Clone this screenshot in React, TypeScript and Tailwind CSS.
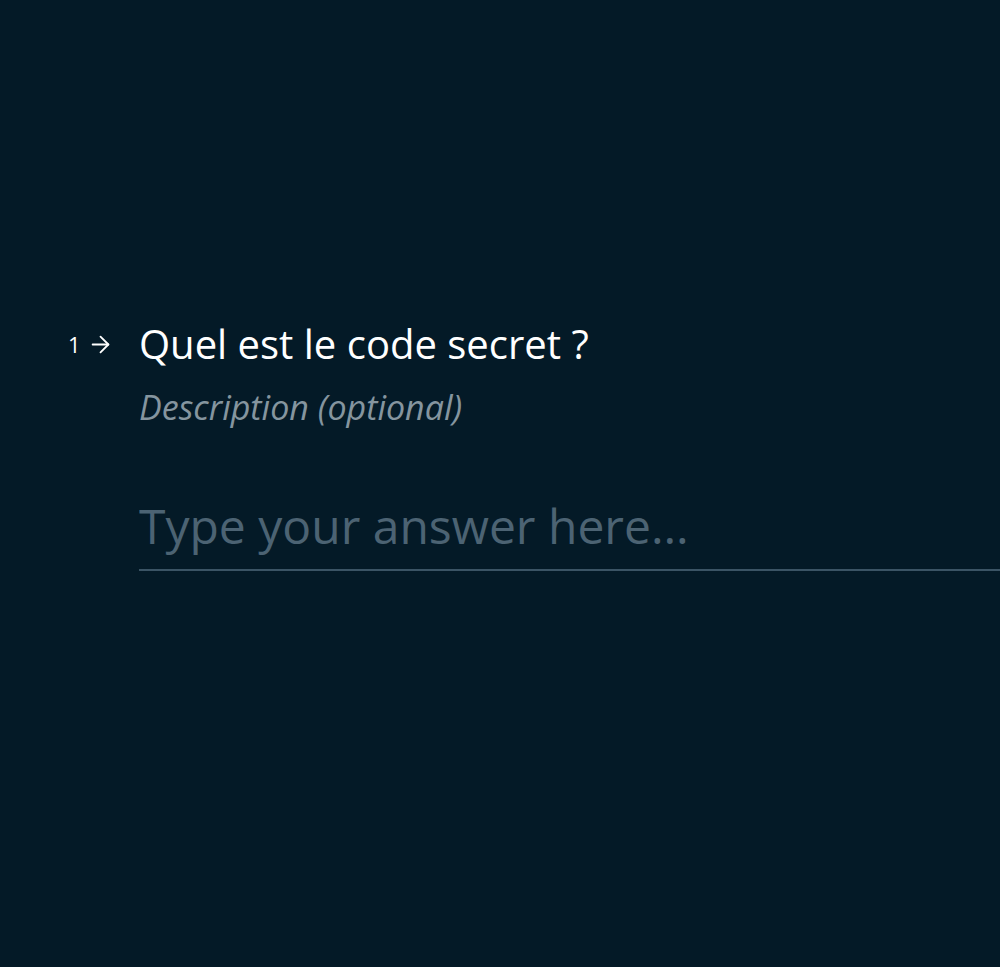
import { ArrowRight } from "lucide-react";

export default function App() {
  return (
    <div className="min-h-[967px] w-full overflow-hidden bg-[#041a27] font-['Open_Sans',sans-serif]">
      <div className="flex pt-[318px] pl-[68px]">
        {/* numéro de question */}
        <div className="flex h-[52px] w-[71px] shrink-0 items-center gap-[6px] text-white">
          <span className="text-[22px] leading-none">1</span>
          <ArrowRight size={27} strokeWidth={1.6} />
        </div>

        <div className="flex-1 min-w-0">
          <h1 className="text-[40px] leading-[52px] text-white">Quel est le code secret ?</h1>
          <p className="mt-[17px] text-[34px] italic leading-[40px] text-[#85959f]">Description (optional)</p>
          <input
            type="text"
            placeholder="Type your answer here..."
            className="mt-[67px] w-[900px] border-b-2 border-[#3b5465] bg-transparent pb-[11px] text-[48px] leading-[64px] text-white outline-none placeholder:text-[#4c6373]"
          />
        </div>
      </div>
    </div>
  );
}
